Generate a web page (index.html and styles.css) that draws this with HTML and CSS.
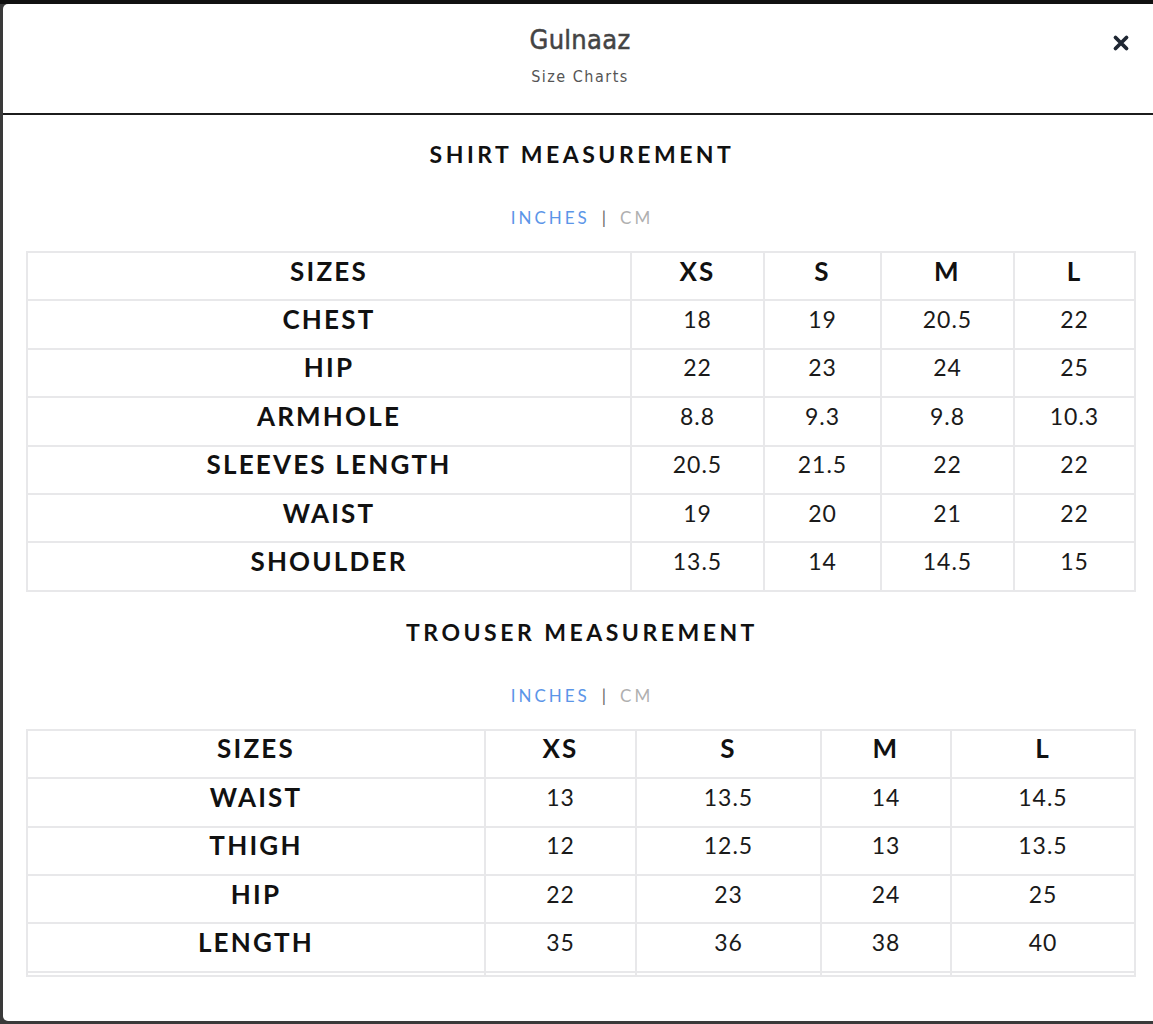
FILE: index.html
```html
<!DOCTYPE html>
<html lang="en">
<head>
<meta charset="utf-8">
<title>Gulnaaz - Size Charts</title>
<link rel="stylesheet" href="styles.css">
</head>
<body>
<div class="modal">
  <div class="modal-header">
    <div class="brand">Gulnaaz</div>
    <div class="subtitle">Size Charts</div>
    <button class="close" aria-label="Close">
      <svg width="18" height="18" viewBox="0 0 18 18"><path d="M3.5 3.5 L14.5 14.5 M14.5 3.5 L3.5 14.5" stroke="#1f2733" stroke-width="3.8" stroke-linecap="round"/></svg>
    </button>
  </div>
  <div class="modal-body">
    <section class="chart">
      <h2 class="chart-title">SHIRT MEASUREMENT</h2>
      <div class="units"><span class="unit active">INCHES</span><span class="sep">|</span><span class="unit">CM</span></div>
      <table class="size-table shirt">
        <colgroup><col class="c1"><col class="c2"><col class="c3"><col class="c4"><col class="c5"></colgroup>
        <tr class="head"><th>SIZES</th><th>XS</th><th>S</th><th>M</th><th>L</th></tr>
        <tr><th>CHEST</th><td>18</td><td>19</td><td>20.5</td><td>22</td></tr>
        <tr><th>HIP</th><td>22</td><td>23</td><td>24</td><td>25</td></tr>
        <tr><th>ARMHOLE</th><td>8.8</td><td>9.3</td><td>9.8</td><td>10.3</td></tr>
        <tr><th>SLEEVES LENGTH</th><td>20.5</td><td>21.5</td><td>22</td><td>22</td></tr>
        <tr><th>WAIST</th><td>19</td><td>20</td><td>21</td><td>22</td></tr>
        <tr><th>SHOULDER</th><td>13.5</td><td>14</td><td>14.5</td><td>15</td></tr>
      </table>
    </section>
    <section class="chart">
      <h2 class="chart-title">TROUSER MEASUREMENT</h2>
      <div class="units"><span class="unit active">INCHES</span><span class="sep">|</span><span class="unit">CM</span></div>
      <table class="size-table trouser">
        <colgroup><col class="c1"><col class="c2"><col class="c3"><col class="c4"><col class="c5"></colgroup>
        <tr class="head"><th>SIZES</th><th>XS</th><th>S</th><th>M</th><th>L</th></tr>
        <tr><th>WAIST</th><td>13</td><td>13.5</td><td>14</td><td>14.5</td></tr>
        <tr><th>THIGH</th><td>12</td><td>12.5</td><td>13</td><td>13.5</td></tr>
        <tr><th>HIP</th><td>22</td><td>23</td><td>24</td><td>25</td></tr>
        <tr><th>LENGTH</th><td>35</td><td>36</td><td>38</td><td>40</td></tr>
        <tr class="empty"><th></th><td></td><td></td><td></td><td></td></tr>
      </table>
    </section>
  </div>
</div>
</body>
</html>
```

FILE: styles.css
```css
html, body {
  margin: 0;
  padding: 0;
}
body {
  background: #3a3a3a;
  border-top: 4px solid #111;
  height: 1020px;
  overflow: hidden;
  font-family: "Lato", "Liberation Sans", sans-serif;
  color: #111;
}
.modal {
  margin-left: 3px;
  width: 1154px;
  height: 1017px;
  background: #fff;
  border-radius: 5px;
  overflow: hidden;
}
.modal-header {
  position: relative;
  height: 111px;
  border-bottom: 2px solid #1c1c1c;
  text-align: center;
  box-sizing: border-box;
  padding-top: 20px;
}
.brand {
  font-family: "DejaVu Sans Condensed", "DejaVu Sans", sans-serif;
  font-stretch: condensed;
  font-size: 27px;
  font-weight: 400;
  color: #444;
  line-height: 32px;
  letter-spacing: 0.3px;
  -webkit-text-stroke: 0.5px #444;
}
.subtitle {
  font-family: "DejaVu Sans Condensed", "DejaVu Sans", sans-serif;
  font-stretch: condensed;
  font-size: 16px;
  color: #555;
  line-height: 20px;
  margin-top: 11px;
  letter-spacing: 1.5px;
}
.close {
  position: absolute;
  top: 30px;
  right: 27px;
  border: 0;
  background: none;
  padding: 0;
  width: 18px;
  height: 18px;
  cursor: pointer;
}
.close svg { display: block; }
.modal-body {
  padding: 0 19px 0 23px;
}
.chart-title {
  margin: 0;
  padding-top: 24px;
  text-align: center;
  font-size: 23px;
  font-weight: 700;
  letter-spacing: 3.5px;
  line-height: 30px;
  color: #111;
}
.chart + .chart .chart-title { padding-top: 25px; }
.units {
  text-align: center;
  font-size: 17px;
  letter-spacing: 3px;
  line-height: 20px;
  margin-top: 39px;
  margin-bottom: 23px;
}
.unit { color: #b0b0b0; }
.unit.active { color: #5b95e8; }
.sep {
  color: #666;
  letter-spacing: 0;
  margin: 0 14px 0 12px;
}
.size-table {
  width: 1108px;
  border-collapse: collapse;
  table-layout: fixed;
  border: 2px solid #e8e8ea;
}
.size-table th,
.size-table td {
  border: 2px solid #e8e8ea;
  text-align: center;
  height: 35.4px;
  padding: 0 0 11px;
}
.size-table th {
  font-size: 26px;
  font-weight: 700;
  letter-spacing: 2.2px;
  color: #111;
}
.size-table td {
  font-size: 23px;
  font-weight: 400;
  letter-spacing: 1px;
  color: #1a1a1a;
}
.shirt .c1 { width: 604px; }
.shirt .c2 { width: 133px; }
.shirt .c3 { width: 117px; }
.shirt .c4 { width: 133px; }
.shirt .c5 { width: 121px; }
.trouser .c1 { width: 458px; }
.trouser .c2 { width: 151px; }
.trouser .c3 { width: 185px; }
.trouser .c4 { width: 130px; }
.trouser .c5 { width: 184px; }
.size-table tr.empty th,
.size-table tr.empty td {
  height: 2px;
  padding: 0;
}
```
